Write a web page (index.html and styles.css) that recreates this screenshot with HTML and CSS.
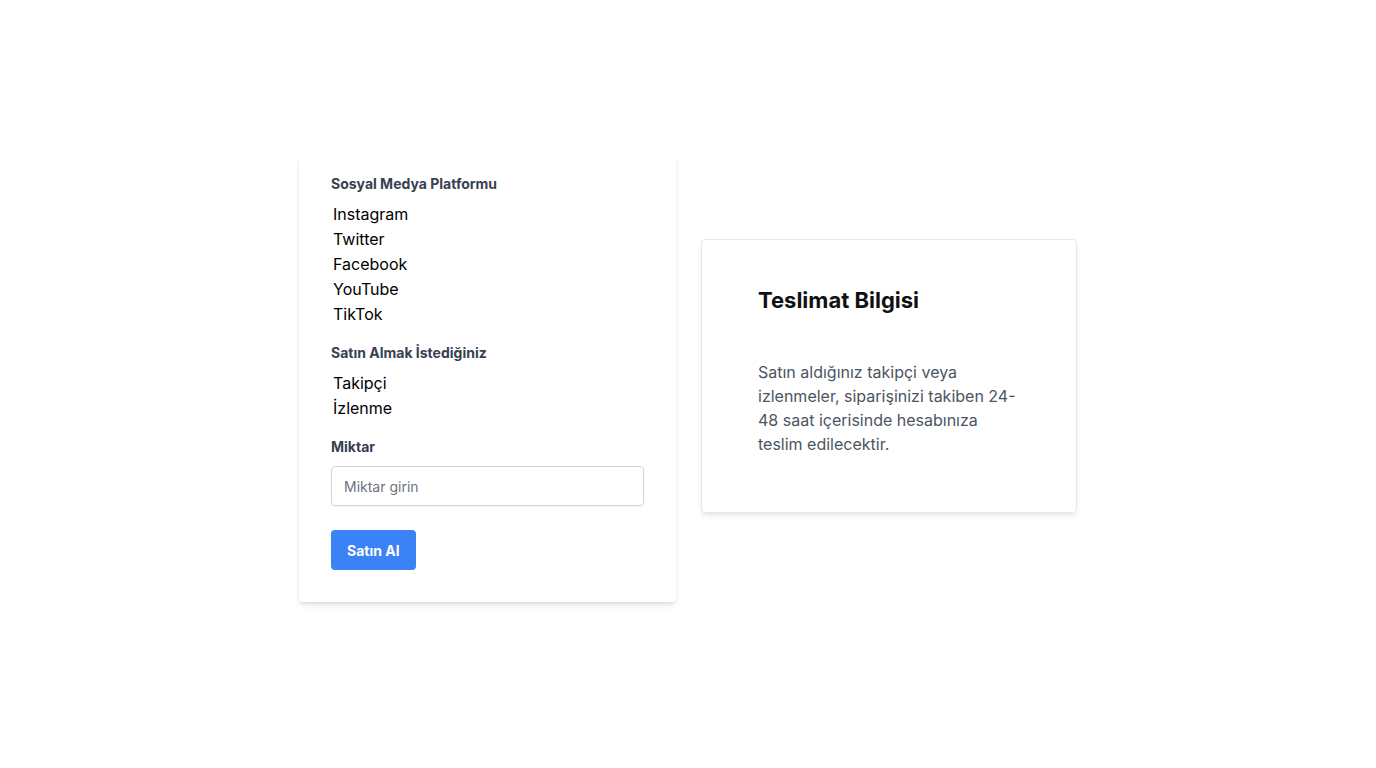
FILE: index.html
```html
<!DOCTYPE html>
<html lang="tr">
<head>
<meta charset="utf-8">
<title>Satın Al</title>
<link rel="stylesheet" href="styles.css">
</head>
<body>
<main class="page">
  <form class="order-card">
    <div class="label">Sosyal Medya Platformu</div>
    <ul class="options">
      <li>Instagram</li>
      <li>Twitter</li>
      <li>Facebook</li>
      <li>YouTube</li>
      <li>TikTok</li>
    </ul>
    <div class="label">Satın Almak İstediğiniz</div>
    <ul class="options">
      <li>Takipçi</li>
      <li>İzlenme</li>
    </ul>
    <div class="label">Miktar</div>
    <input class="amount" type="text" placeholder="Miktar girin">
    <button class="buy" type="button">Satın Al</button>
  </form>
  <section class="info-card">
    <h2 class="info-title">Teslimat Bilgisi</h2>
    <p class="info-text">Satın aldığınız takipçi veya izlenmeler, siparişinizi takiben 24-48 saat içerisinde hesabınıza teslim edilecektir.</p>
  </section>
</main>
</body>
</html>
```
FILE: styles.css
```css
* { box-sizing: border-box; }
html, body { margin: 0; padding: 0; background: #ffffff; }
body {
  font-family: Inter, "Noto Sans", sans-serif;
  color: #111827;
  height: 768px;
}
.page {
  height: 768px;
  display: flex;
  align-items: center;
  justify-content: center;
  gap: 25px;
  padding-bottom: 12px;
}
.order-card {
  width: 377px;
  background: #fff;
  border-radius: 4px;
  box-shadow: 0 4px 6px -1px rgba(0,0,0,0.10), 0 2px 4px -2px rgba(0,0,0,0.10);
  padding: 20px 32px 32px;
  display: flex;
  flex-direction: column;
  align-items: flex-start;
}
.label {
  font-size: 14px;
  line-height: 20px;
  font-weight: 700;
  color: #374151;
  margin-bottom: 8px;
}
.options {
  list-style: none;
  margin: 0 0 16px;
  padding: 0 2px;
  font-size: 16px;
  line-height: 25px;
  color: #000;
}
.amount {
  width: 100%;
  height: 40px;
  margin-top: 1px;
  border: 1px solid #d1d5db;
  border-radius: 4px;
  padding: 0 12px;
  font-family: inherit;
  font-size: 14px;
  color: #111827;
  box-shadow: 0 1px 2px rgba(0,0,0,0.05);
  outline: none;
}
.amount::placeholder { color: #6b7280; }
.buy {
  margin-top: 24px;
  height: 40px;
  padding: 0 16px;
  border: none;
  border-radius: 4px;
  background: #3b82f6;
  color: #fff;
  font-family: inherit;
  font-size: 14px;
  font-weight: 700;
}
.info-card {
  width: 376px;
  margin-bottom: 5px;
  background: #fff;
  border: 1px solid #e5e7eb;
  border-radius: 4px;
  box-shadow: 0 4px 6px -1px rgba(0,0,0,0.08), 0 2px 4px -2px rgba(0,0,0,0.06);
  padding: 44px 56px 56px;
}
.info-title {
  margin: 0 0 44px;
  font-size: 22px;
  line-height: 32px;
  font-weight: 700;
  color: #111;
}
.info-text {
  margin: 0;
  width: 260px;
  font-size: 16px;
  line-height: 24px;
  color: #4b5563;
}
```
